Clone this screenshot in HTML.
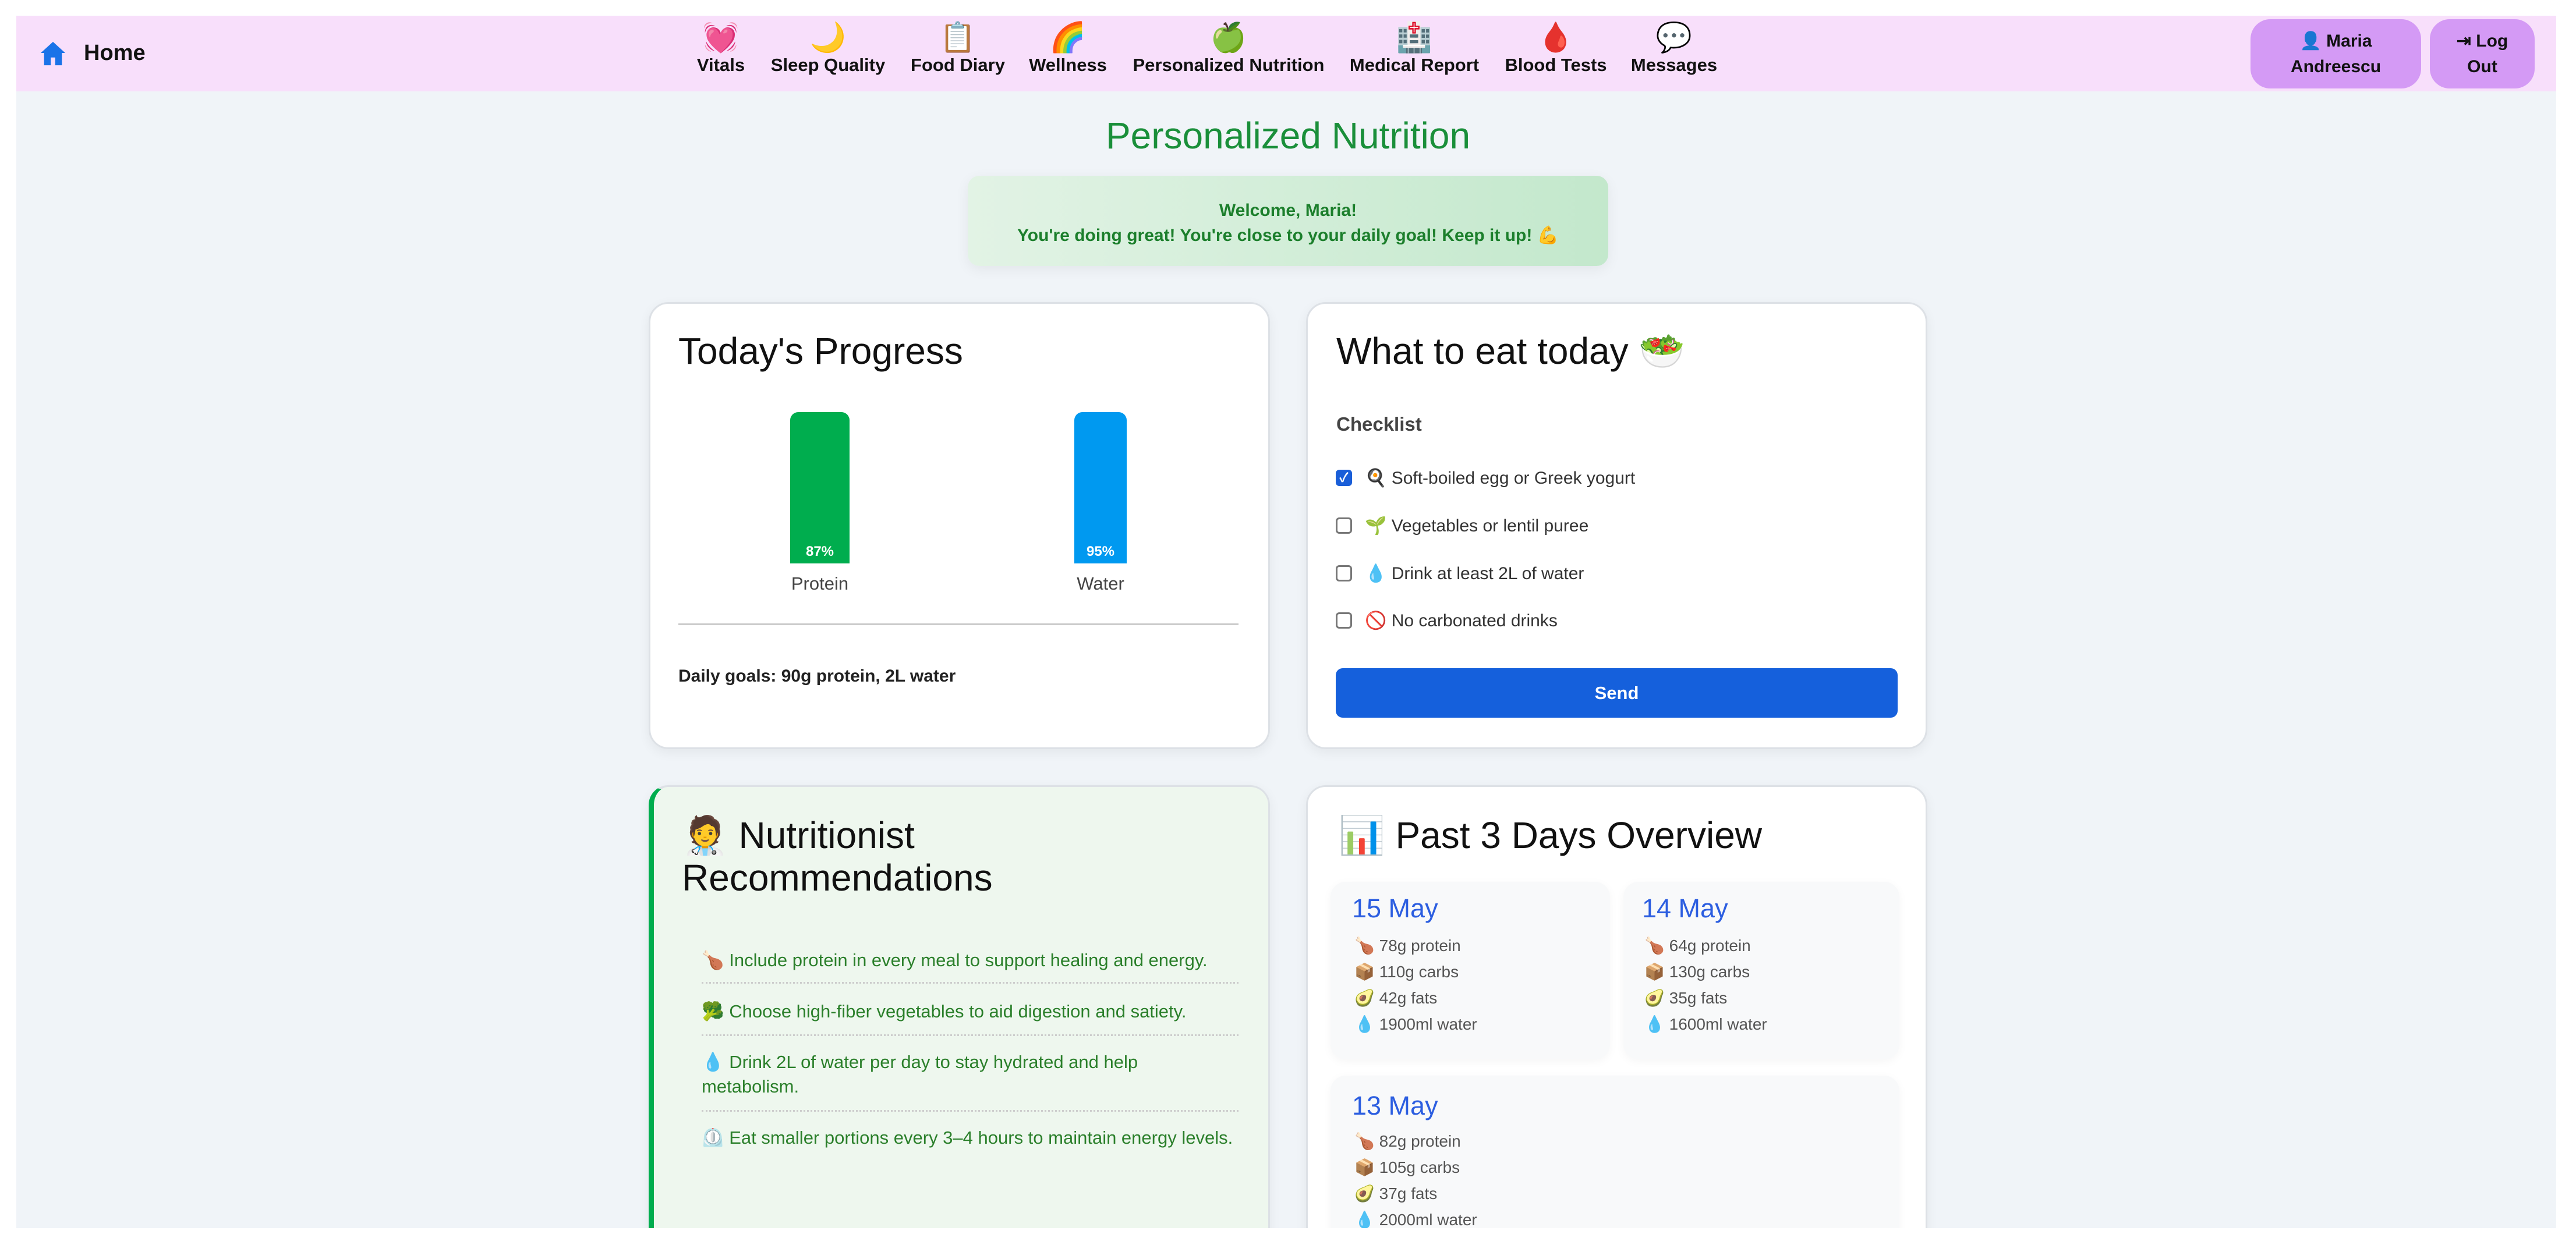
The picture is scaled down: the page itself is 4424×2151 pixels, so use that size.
<!DOCTYPE html>
<html><head><meta charset="utf-8"><style>
*{margin:0;padding:0;box-sizing:border-box}
html,body{width:4424px;height:2151px;overflow:hidden;background:#fff}
body{font-family:"Liberation Sans","Noto Sans CJK JP",sans-serif;color:#111}
#wrap{position:relative;width:4424px;height:2151px;overflow:hidden;background:#fff}
.a{position:absolute}
#page{left:28px;top:28px;width:4362px;height:2082px;background:#f0f4f8;overflow:hidden}
#nav{left:28px;top:27px;width:4362px;height:130px;background:#f8dffb}
.ni{position:absolute;top:34px;transform:translateX(-50%);text-align:center;font-weight:bold;font-size:31px;white-space:nowrap}
.ni .ic{font-size:50px;line-height:60px;display:block}
.btn{position:absolute;top:33px;height:119px;background:#d49af5;border-radius:34px;font-weight:bold;font-size:30px;text-align:center;display:flex;align-items:center;justify-content:center;line-height:44px}
.card{position:absolute;background:#fff;border:3px solid #dde1e6;border-radius:34px;box-shadow:0 6px 20px rgba(0,0,0,.06)}
.t{position:absolute;font-size:64px;white-space:nowrap}
.ck{position:absolute;left:2294px;width:28px;height:28px;border:3px solid #777;border-radius:6px;background:#fff}
.ci{position:absolute;left:2344px;font-size:30px;white-space:nowrap;color:#333}
.rec{position:absolute;left:1205px;width:922px;font-size:31px;color:#2a7f2a;line-height:42px}
.sep{position:absolute;left:1205px;width:922px;border-top:3px dotted #ccc}
.day{position:absolute;background:#f8f9fa;border-radius:26px;box-shadow:0 4px 16px rgba(0,0,0,.04)}
.dh{position:absolute;font-size:45px;color:#2c5ee0}
.di{position:absolute;font-size:28px;color:#555;white-space:nowrap}
</style></head><body><div id="wrap">
<div id="page" class="a"></div>
<div id="nav" class="a"></div>
<div class="a" style="left:68px;top:70px;"><svg width="46" height="44" viewBox="0 0 24 23"><path d="M12 1 L23 11 H20 V22 H14 V15 H10 V22 H4 V11 H1 Z" fill="#1a73e8"/></svg></div>
<div class="a" style="left:144px;top:70px;font-size:38px;font-weight:bold">Home</div>
<div class="ni" style="left:1238px"><span class="ic" style="color:#f0386b">💓</span>Vitals</div>
<div class="ni" style="left:1422px"><span class="ic">🌙</span>Sleep Quality</div>
<div class="ni" style="left:1645px"><span class="ic">📋</span>Food Diary</div>
<div class="ni" style="left:1834px"><span class="ic">🌈</span>Wellness</div>
<div class="ni" style="left:2110px"><span class="ic">🍏</span>Personalized Nutrition</div>
<div class="ni" style="left:2429px"><span class="ic">🏥</span>Medical Report</div>
<div class="ni" style="left:2672px"><span class="ic">🩸</span>Blood Tests</div>
<div class="ni" style="left:2875px"><span class="ic">💬</span>Messages</div>
<div class="btn" style="left:3865px;width:293px">👤 Maria<br>Andreescu</div>
<div class="btn" style="left:4173px;width:180px">⇥ Log<br>Out</div>

<div class="a" style="left:0;width:4424px;top:196px;text-align:center;font-size:64px;color:#1a8f3a">Personalized Nutrition</div>
<div class="a" style="left:1662px;top:302px;width:1100px;height:155px;border-radius:20px;background:linear-gradient(90deg,#e2f3e5,#c3e8cc);box-shadow:0 6px 24px rgba(0,0,0,.06);text-align:center;font-weight:bold;font-size:30px;color:#1c7f2c;padding-top:38px;line-height:43px">Welcome, Maria!<br>You're doing great! You're close to your daily goal! Keep it up! 💪</div>

<div class="card" style="left:1114px;top:519px;width:1067px;height:768px"></div>
<div class="t" style="left:1165px;top:566px">Today's Progress</div>
<div class="a" style="left:1357px;top:708px;width:102px;height:260px;background:#00ad4e;border-radius:14px 14px 0 0"></div>
<div class="a" style="left:1357px;top:934px;width:102px;text-align:center;color:#fff;font-weight:bold;font-size:24px">87%</div>
<div class="a" style="left:1845px;top:708px;width:90px;height:260px;background:#0099f0;border-radius:14px 14px 0 0"></div>
<div class="a" style="left:1845px;top:934px;width:90px;text-align:center;color:#fff;font-weight:bold;font-size:24px">95%</div>
<div class="a" style="left:1308px;top:985px;width:200px;text-align:center;font-size:31px;color:#444">Protein</div>
<div class="a" style="left:1790px;top:985px;width:200px;text-align:center;font-size:31px;color:#444">Water</div>
<div class="a" style="left:1165px;top:1071px;width:962px;border-top:3px solid #ccc"></div>
<div class="a" style="left:1165px;top:1145px;font-weight:bold;font-size:30px;color:#222">Daily goals: 90g protein, 2L water</div>

<div class="card" style="left:2243px;top:519px;width:1067px;height:768px"></div>
<div class="t" style="left:2295px;top:566px">What to eat today 🥗</div>
<div class="a" style="left:2295px;top:710px;font-weight:bold;font-size:33px;color:#444">Checklist</div>
<div class="ck" style="top:807px;background:#1a5ed8;border-color:#1a5ed8;color:#fff;font-size:22px;line-height:22px;text-align:center;font-weight:bold">✓</div>
<div class="ci" style="top:804px">🍳 Soft-boiled egg or Greek yogurt</div>
<div class="ck" style="top:889px"></div>
<div class="ci" style="top:886px">🌱 Vegetables or lentil puree</div>
<div class="ck" style="top:971px"></div>
<div class="ci" style="top:968px">💧 Drink at least 2L of water</div>
<div class="ck" style="top:1052px"></div>
<div class="ci" style="top:1049px">🚫 No carbonated drinks</div>
<div class="a" style="left:2294px;top:1148px;width:965px;height:85px;background:#1560dc;border-radius:12px;color:#fff;font-weight:bold;font-size:31px;text-align:center;line-height:85px">Send</div>

<div class="card" style="left:1114px;top:1349px;width:1067px;height:900px;background:#eef7ee;border-left:9px solid #00ad4e"></div>
<div class="t" style="left:1171px;top:1398px">🧑‍⚕️ Nutritionist</div>
<div class="t" style="left:1171px;top:1471px">Recommendations</div>
<div class="rec" style="top:1629px">🍗 Include protein in every meal to support healing and energy.</div>
<div class="sep" style="top:1687px"></div>
<div class="rec" style="top:1717px">🥦 Choose high-fiber vegetables to aid digestion and satiety.</div>
<div class="sep" style="top:1777px"></div>
<div class="rec" style="top:1804px">💧 Drink 2L of water per day to stay hydrated and help<br>metabolism.</div>
<div class="sep" style="top:1907px"></div>
<div class="rec" style="top:1934px">⏲️ Eat smaller portions every 3–4 hours to maintain energy levels.</div>

<div class="card" style="left:2243px;top:1349px;width:1067px;height:900px"></div>
<div class="t" style="left:2299px;top:1398px">📊 Past 3 Days Overview</div>
<div class="day" style="left:2285px;top:1515px;width:480px;height:305px"></div>
<div class="day" style="left:2788px;top:1515px;width:474px;height:305px"></div>
<div class="day" style="left:2285px;top:1848px;width:977px;height:300px"></div>
<div class="dh" style="left:2322px;top:1535px">15 May</div>
<div class="di" style="left:2326px;top:1608px">🍗 78g protein</div>
<div class="di" style="left:2326px;top:1653px">📦 110g carbs</div>
<div class="di" style="left:2326px;top:1698px">🥑 42g fats</div>
<div class="di" style="left:2326px;top:1743px">💧 1900ml water</div>
<div class="dh" style="left:2820px;top:1535px">14 May</div>
<div class="di" style="left:2824px;top:1608px">🍗 64g protein</div>
<div class="di" style="left:2824px;top:1653px">📦 130g carbs</div>
<div class="di" style="left:2824px;top:1698px">🥑 35g fats</div>
<div class="di" style="left:2824px;top:1743px">💧 1600ml water</div>
<div class="dh" style="left:2322px;top:1874px">13 May</div>
<div class="di" style="left:2326px;top:1944px">🍗 82g protein</div>
<div class="di" style="left:2326px;top:1989px">📦 105g carbs</div>
<div class="di" style="left:2326px;top:2034px">🥑 37g fats</div>
<div class="di" style="left:2326px;top:2079px">💧 2000ml water</div>

<div class="a" style="left:0;top:2110px;width:4424px;height:41px;background:#fff"></div>
<div class="a" style="left:4390px;top:0;width:34px;height:2151px;background:#fff"></div>
</div></body></html>
